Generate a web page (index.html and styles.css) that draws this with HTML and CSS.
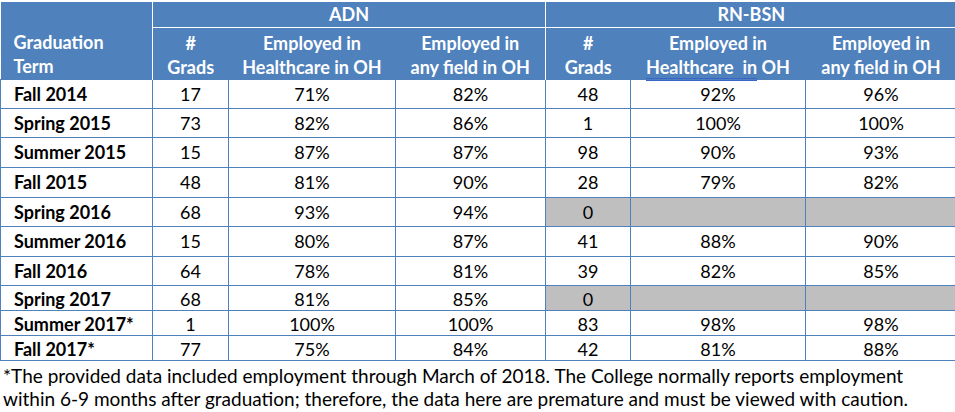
FILE: index.html
```html
<!DOCTYPE html>
<html>
<head>
<meta charset="utf-8">
<link rel="stylesheet" href="styles.css">
</head>
<body>
<table class="grid">
  <colgroup>
    <col class="c-term"><col class="c-grads"><col class="c-hc"><col class="c-any">
    <col class="c-grads2"><col class="c-hc2"><col class="c-any2">
  </colgroup>
  <thead>
    <tr class="h1">
      <th class="term-h" rowspan="2">Graduation<br>Term</th>
      <th class="grp grp-adn" colspan="3">ADN</th>
      <th class="grp grp-rn" colspan="3">RN-BSN</th>
    </tr>
    <tr class="h2">
      <th class="first-adn">#<br>Grads</th>
      <th>Employed in<br>Healthcare in OH</th>
      <th>Employed in<br>any field in OH</th>
      <th class="first-rn">#<br>Grads</th>
      <th>Employed in<br><span class="mark">Healthcare &nbsp;in</span> OH</th>
      <th>Employed in<br>any field in OH</th>
    </tr>
  </thead>
  <tbody>
    <tr class="r29"><td class="term">Fall 2014</td><td>17</td><td>71%</td><td>82%</td><td>48</td><td>92%</td><td>96%</td></tr>
    <tr class="r29"><td class="term">Spring 2015</td><td>73</td><td>82%</td><td>86%</td><td>1</td><td>100%</td><td>100%</td></tr>
    <tr class="r30"><td class="term">Summer 2015</td><td>15</td><td>87%</td><td>87%</td><td>98</td><td>90%</td><td>93%</td></tr>
    <tr class="r30"><td class="term">Fall 2015</td><td>48</td><td>81%</td><td>90%</td><td>28</td><td>79%</td><td>82%</td></tr>
    <tr class="r29"><td class="term">Spring 2016</td><td>68</td><td>93%</td><td>94%</td><td class="na">0</td><td class="na"></td><td class="na"></td></tr>
    <tr class="r30"><td class="term">Summer 2016</td><td>15</td><td>80%</td><td>87%</td><td>41</td><td>88%</td><td>90%</td></tr>
    <tr class="r29"><td class="term">Fall 2016</td><td>64</td><td>78%</td><td>81%</td><td>39</td><td>82%</td><td>85%</td></tr>
    <tr class="r25"><td class="term">Spring 2017</td><td>68</td><td>81%</td><td>85%</td><td class="na">0</td><td class="na"></td><td class="na"></td></tr>
    <tr class="r24"><td class="term">Summer 2017*</td><td>1</td><td>100%</td><td>100%</td><td>83</td><td>98%</td><td>98%</td></tr>
    <tr class="r24"><td class="term">Fall 2017*</td><td>77</td><td>75%</td><td>84%</td><td>42</td><td>81%</td><td>88%</td></tr>
  </tbody>
</table>
<p class="note">*The provided data included employment through March of 2018. The College normally reports employment<br>within 6-9 months after graduation; therefore, the data here are premature and must be viewed with caution.</p>
</body>
</html>
```

FILE: styles.css
```css
html, body {
  margin: 0;
  padding: 0;
  background: #ffffff;
}

body {
  font-family: Lato, "Open Sans", sans-serif;
  font-size: 18px;
  color: #000000;
  overflow: hidden;
}

.grid {
  margin-top: 2px;
  width: 956px;
  table-layout: fixed;
  border-collapse: collapse;
}

.c-term { width: 152px; }
.c-grads { width: 76px; }
.c-hc { width: 167px; }
.c-any { width: 150px; }
.c-grads2 { width: 85px; }
.c-hc2 { width: 175px; }
.c-any2 { width: 151px; }

thead th {
  background: #4f81bd;
  color: #ffffff;
  font-weight: 700;
  border: none;
  padding: 0;
  line-height: 24px;
  text-align: center;
  vertical-align: middle;
}

.h1 { height: 25px; }
.h2 { height: 52px; }

.term-h {
  text-align: left;
  vertical-align: bottom;
  padding: 0 0 1px 13px;
  border-right: 1px solid #ffffff;
}

.grp {
  border-bottom: 1px solid #ffffff;
}

.grp-adn { border-left: 1px solid #ffffff; }
.grp-rn { border-left: 1px solid #ffffff; }

.h2 th {
  padding-top: 3px;
  padding-bottom: 0;
}
.first-adn { border-left: 1px solid #ffffff; }
.first-rn { border-left: 1px solid #ffffff; }

.mark {
  border-bottom: 3px double #3a64c8;
}

tbody td {
  border: 1px solid #4f81bd;
  padding: 0;
  text-align: center;
  vertical-align: middle;
  line-height: 22px;
}

tbody td.term {
  text-align: left;
  font-weight: 700;
  padding-left: 13px;
}

tbody td.na {
  background: #bfbfbf;
}

.r24 { height: 24px; }
.r25 { height: 25px; }
.r29 { height: 29px; }
.r30 { height: 30px; }

.r24 td,
.r25 td {
  padding-top: 2px;
}

.note {
  margin: 3px 0 0 3px;
  font-size: 19px;
  line-height: 23px;
  white-space: nowrap;
}
```
